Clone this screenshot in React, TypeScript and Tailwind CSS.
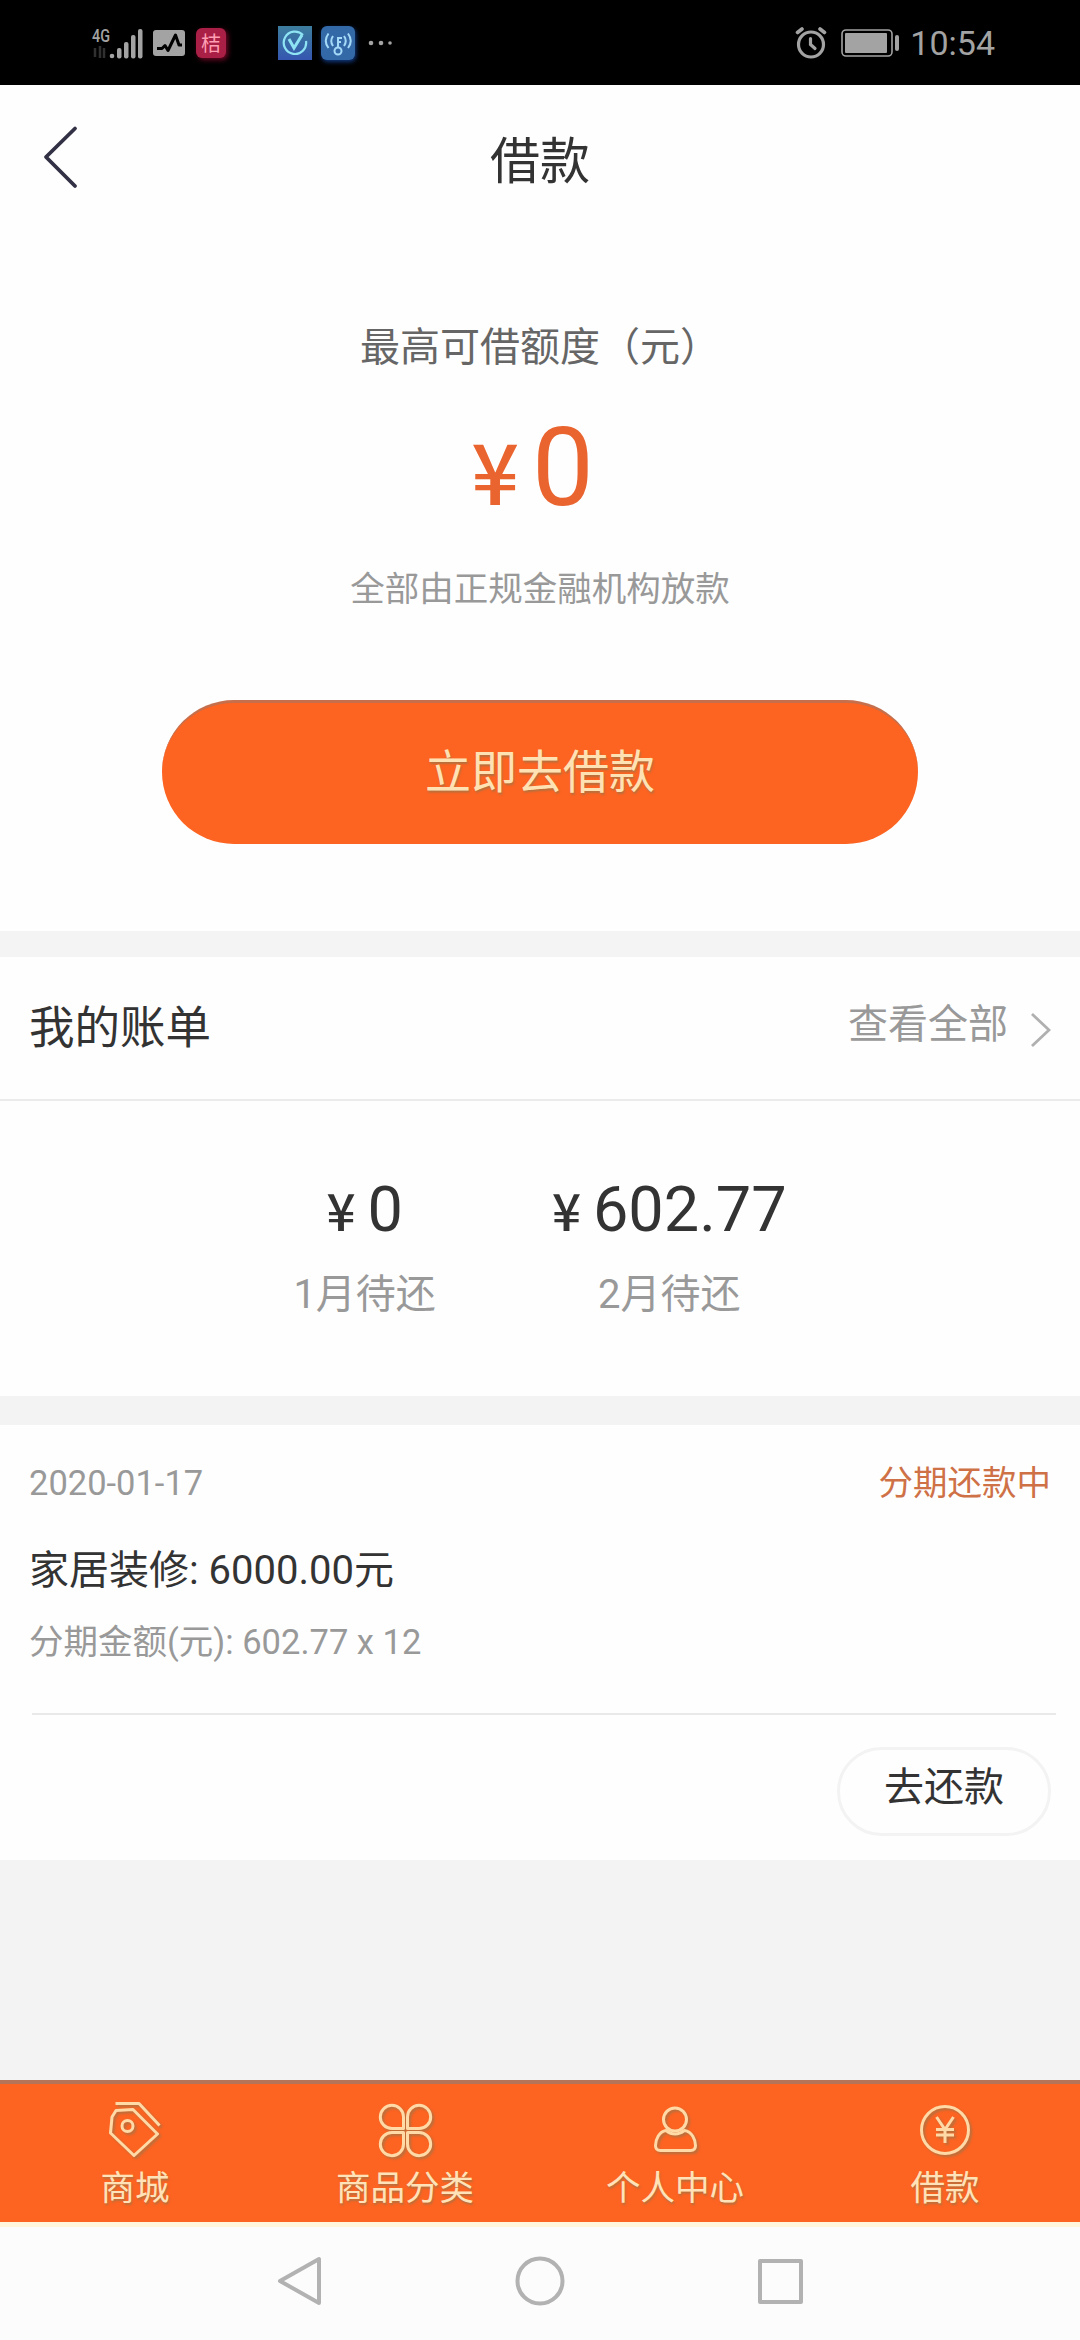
import type { ReactNode } from "react";

const TABS: { label: string; icon: ReactNode }[] = [
  { label: "商城", icon: <TagIcon /> },
  { label: "商品分类", icon: <CloverIcon /> },
  { label: "个人中心", icon: <PersonIcon /> },
  { label: "借款", icon: <YenIcon /> },
];

const BILLS = [
  { amount: "0", label: "1月待还" },
  { amount: "602.77", label: "2月待还" },
];

function TagIcon() {
  return (
    <svg className="drop-shadow-[2px_2px_1px_#b5703f]" width="60" height="60" viewBox="0 0 60 60" fill="none" stroke="currentColor" strokeWidth="3" strokeLinejoin="round">
      <path d="M11 10.500 28 9.500 52.500 34 29 55.500 5.500 33 7 17Z" />
      <path d="M10.500 3.500H34L54.500 25.500" />
      <circle cx="22.500" cy="26" r="5.500" />
    </svg>
  );
}

function CloverIcon() {
  return (
    <svg className="drop-shadow-[2px_2px_1px_#b5703f]" width="60" height="60" viewBox="0 0 60 60" fill="none" stroke="currentColor" strokeWidth="3" strokeLinejoin="round">
      <path d="M28.500 28.500V17A11.600 11.600 0 1 0 17 28.500Z" />
      <path d="M32.500 28.500V17A11.600 11.600 0 1 1 44 28.500Z" />
      <path d="M28.500 32.500V44A11.600 11.600 0 1 1 17 32.500Z" />
      <path d="M32.500 32.500V44A11.600 11.600 0 1 0 44 32.500Z" />
    </svg>
  );
}

function PersonIcon() {
  return (
    <svg className="drop-shadow-[2px_2px_1px_#b5703f]" width="60" height="60" viewBox="0 0 60 60" fill="none" stroke="currentColor" strokeWidth="3" strokeLinejoin="round">
      <circle cx="30" cy="19.500" r="11.500" />
      <path d="M21 30.500C14 31.500 10.500 40 10.500 45.500Q10.500 50.500 15.500 50.500H45.500Q50.500 50.500 50.500 45.500C50.500 40 47 31.500 39.500 30.500Q30 37.500 21 30.500Z" />
    </svg>
  );
}

function YenIcon() {
  return (
    <svg className="drop-shadow-[2px_2px_1px_#b5703f]" width="60" height="60" viewBox="0 0 60 60" fill="none" stroke="currentColor" strokeWidth="3">
      <circle cx="30" cy="30" r="23.500" />
      <path d="M21.500 17 30 29.500 38.500 17M30 29.500V43M21 29.500H39M21 35H39" />
    </svg>
  );
}

function StatusBar() {
  return (
    <div className="flex h-[85px] items-center bg-black pr-[85px] pl-[91px] text-[#a3a3a3]">
      <svg width="52" height="44" viewBox="0 -5 52 44" fill="currentColor">
        <text x="1" y="15.500" fontSize="19" fontWeight="500" fontFamily="Roboto, sans-serif" textLength="18" lengthAdjust="spacingAndGlyphs">
          4G
        </text>
        <path d="M4 22V31M9 20V32M13 22V32" stroke="#303030" strokeWidth="2.500" />
        <circle cx="21" cy="30" r="2.300" />
        <rect x="26" y="22" width="4.500" height="10.500" rx="2" />
        <rect x="33" y="16" width="4.500" height="16.500" rx="2" />
        <rect x="40" y="9" width="4.500" height="23.500" rx="2" />
        <rect x="47" y="3" width="4.500" height="29.500" rx="2" />
      </svg>
      <svg className="ml-[10px]" width="32" height="26" viewBox="0 0 32 26">
        <rect width="32" height="26" rx="3" fill="#a3a3a3" />
        <path d="M4 18.500H9L12 15.500 15 20.500 22.500 5 26 15H29" fill="none" stroke="#000" strokeWidth="3" strokeLinejoin="round" />
      </svg>
      <span className="ml-[11px] flex size-[30px] items-center justify-center rounded-[6px] bg-[#a91f45] font-['Noto_Sans_CJK_SC',sans-serif] text-[20px] leading-none text-[#ff9fb4] shadow-[2px_2px_5px_#6d0826]">
        桔
      </span>
      <span className="ml-[52px] flex size-[34px] items-center justify-center bg-linear-to-b from-[#3d7d9d] to-[#3656b0]">
        <svg width="26" height="26" viewBox="0 0 26 26" fill="none" stroke="#8fe4f4" strokeWidth="2.200">
          <path d="M21 5A11.200 11.200 0 1 0 24 11" />
          <path d="M7 9 12 18 20 5" strokeWidth="3" />
        </svg>
      </span>
      <span className="ml-[9px] flex size-[34px] items-center justify-center rounded-[6px] bg-[#3469a8] shadow-[1px_2px_4px_#123a80]">
        <svg width="28" height="28" viewBox="0 0 28 28" fill="none" stroke="#a4daf7" strokeWidth="2">
          <circle cx="14" cy="22" r="3.500" />
          <path d="M14 18.500V8M14 9H18M14 13H17M9 7Q5.500 12 9 17M20 7Q23.500 12 20 17M4.500 4.500Q-1 12 4.500 19M24 4.500Q29.500 12 24 19" />
        </svg>
      </span>
      <svg className="ml-[13px]" width="26" height="6" viewBox="0 0 26 6" fill="currentColor">
        <circle cx="3" cy="3" r="2.300" />
        <circle cx="13" cy="3" r="2.300" />
        <circle cx="22" cy="3" r="1.800" />
      </svg>
      <svg className="ml-auto" width="32" height="32" viewBox="0 0 32 32" fill="none" stroke="currentColor" strokeWidth="3.200" strokeLinecap="round">
        <circle cx="16" cy="17.500" r="12.500" />
        <path d="M15.500 11.500V17.500L20 21.500" />
        <path d="M2.500 5.500 7 2M29.500 5.500 25 2" strokeWidth="3.600" />
      </svg>
      <svg className="ml-[14px]" width="60" height="28" viewBox="0 0 60 28" fill="currentColor">
        <rect x="1" y="1" width="50" height="26" rx="4" fill="none" stroke="currentColor" strokeWidth="1.600" />
        <rect x="4" y="4" width="42" height="20" rx="1" />
        <rect x="54" y="6" width="4" height="16" rx="2" />
      </svg>
      <span className="ml-[9px] text-[34px] leading-none">10:54</span>
    </div>
  );
}

export default function App() {
  return (
    <div className="flex h-[2340px] w-[1080px] flex-col overflow-hidden bg-[#fefefe] font-[Roboto,'Noto_Sans_CJK_SC',sans-serif] text-[#333]">
      <StatusBar />

      <header className="grid h-[144px] grid-cols-3 items-center">
        <svg className="ml-[43px]" width="36" height="64" viewBox="0 0 36 64" fill="none" stroke="#323044" strokeWidth="3.800" strokeLinecap="round" strokeLinejoin="round">
          <path d="M32 3.500 3 32 32 61" />
        </svg>
        <h1 className="pt-[9px] text-center text-[50px] leading-none">借款</h1>
      </header>

      <section className="flex h-[702px] flex-col items-center pt-[99px]">
        <p className="text-[40px] leading-none text-[#666]">最高可借额度（元）</p>
        <div className="mt-[45px] flex items-baseline gap-[13px] pr-[15px] leading-none text-[#e9642f]">
          <span className="font-['Noto_Sans_CJK_SC',sans-serif] text-[84px] leading-none font-medium">¥</span>
          <span className="text-[110px] leading-none">0</span>
        </div>
        <p className="mt-[49px] text-[34.5px] leading-none text-[#999]">全部由正规金融机构放款</p>
        <button className="mt-[93px] h-[144px] w-[756px] rounded-[72px] border-t-[3px] border-[#c56f4c] bg-[#fd6321] pb-[2px] text-[46px] leading-none text-[#ffe2b4] [text-shadow:1px_2px_2px_#b5703f]">
          立即去借款
        </button>
      </section>

      <div className="h-[26px] bg-[#f4f4f4]" />

      <section className="h-[439px]">
        <div className="flex h-[144px] items-center justify-between border-b-2 border-[#ebebeb] pr-[29px] pl-[29px]">
          <h2 className="pt-[2px] text-[45.5px] leading-none">我的账单</h2>
          <div className="flex items-center gap-[22px] text-[#999]">
            <span className="pb-[7px] text-[40px] leading-none">查看全部</span>
            <svg className="mt-[3px]" width="21" height="36" viewBox="0 0 21 36" fill="none" stroke="#b0b0b0" strokeWidth="2.800">
              <path d="M2 2 19 18 2 34" />
            </svg>
          </div>
        </div>
        <div className="flex justify-center gap-[116px] pt-[77px]">
          {BILLS.map(({ amount, label }) => (
            <div key={label} className="flex flex-col items-center">
              <div className="flex items-baseline gap-[12px]">
                <span className="font-['Noto_Sans_CJK_SC',sans-serif] text-[51px] leading-none font-medium">¥</span>
                <span className="text-[63px] leading-none">{amount}</span>
              </div>
              <span className="mt-[34px] text-[40px] leading-none text-[#999]">{label}</span>
            </div>
          ))}
        </div>
      </section>

      <div className="h-[29px] bg-[#f3f3f3]" />

      <section className="h-[435px] pr-[29px] pl-[29px]">
        <div className="flex justify-between pt-[41px] text-[34.5px] leading-none text-[#999]">
          <span>2020-01-17</span>
          <span className="text-[#cf7146]">分期还款中</span>
        </div>
        <p className="mt-[50px] text-[40px] leading-none">家居装修: 6000.00元</p>
        <p className="mt-[34px] text-[34.5px] leading-none text-[#999]">分期金额(元): 602.77 x 12</p>
        <div className="mt-[54px] -mr-[5px] ml-[3px] h-[2px] bg-[#e9e9e9]" />
        <div className="mt-[32px] flex justify-end">
          <button className="h-[89px] w-[214px] rounded-full border-[3px] border-[#f3f3f3] pb-[7px] text-[40px] leading-none">去还款</button>
        </div>
      </section>

      <div className="h-[220px] bg-[#f3f3f3]" />

      <nav className="grid h-[142px] grid-cols-4 border-t-4 border-[#b3745a] bg-[#fd6321] pt-[16px] text-[#ffd9a6]">
        {TABS.map((tab) => (
          <div key={tab.label} className="flex flex-col items-center">
            {tab.icon}
            <span className="mt-[11px] text-[34.5px] leading-none text-[#ffe2b8] [text-shadow:1px_2px_2px_#b5703f]">{tab.label}</span>
          </div>
        ))}
      </nav>

      <div className="flex h-[118px] items-start justify-between border-t-[5px] border-[#fff6dc] bg-[#fcfcfc] pt-[27px] pr-[276px] pl-[276px]">
        <svg width="50" height="54" viewBox="0 0 50 54" fill="none" stroke="#b2b2b2" strokeWidth="4" strokeLinejoin="round">
          <path d="M43 5V49L4 27Z" />
        </svg>
        <svg width="54" height="54" viewBox="0 0 54 54" fill="none" stroke="#b2b2b2" strokeWidth="4">
          <circle cx="27" cy="27" r="22.500" />
        </svg>
        <svg width="50" height="54" viewBox="0 0 50 54" fill="none" stroke="#b2b2b2" strokeWidth="4" strokeLinejoin="round">
          <rect x="6" y="7" width="41" height="41" />
        </svg>
      </div>
    </div>
  );
}
